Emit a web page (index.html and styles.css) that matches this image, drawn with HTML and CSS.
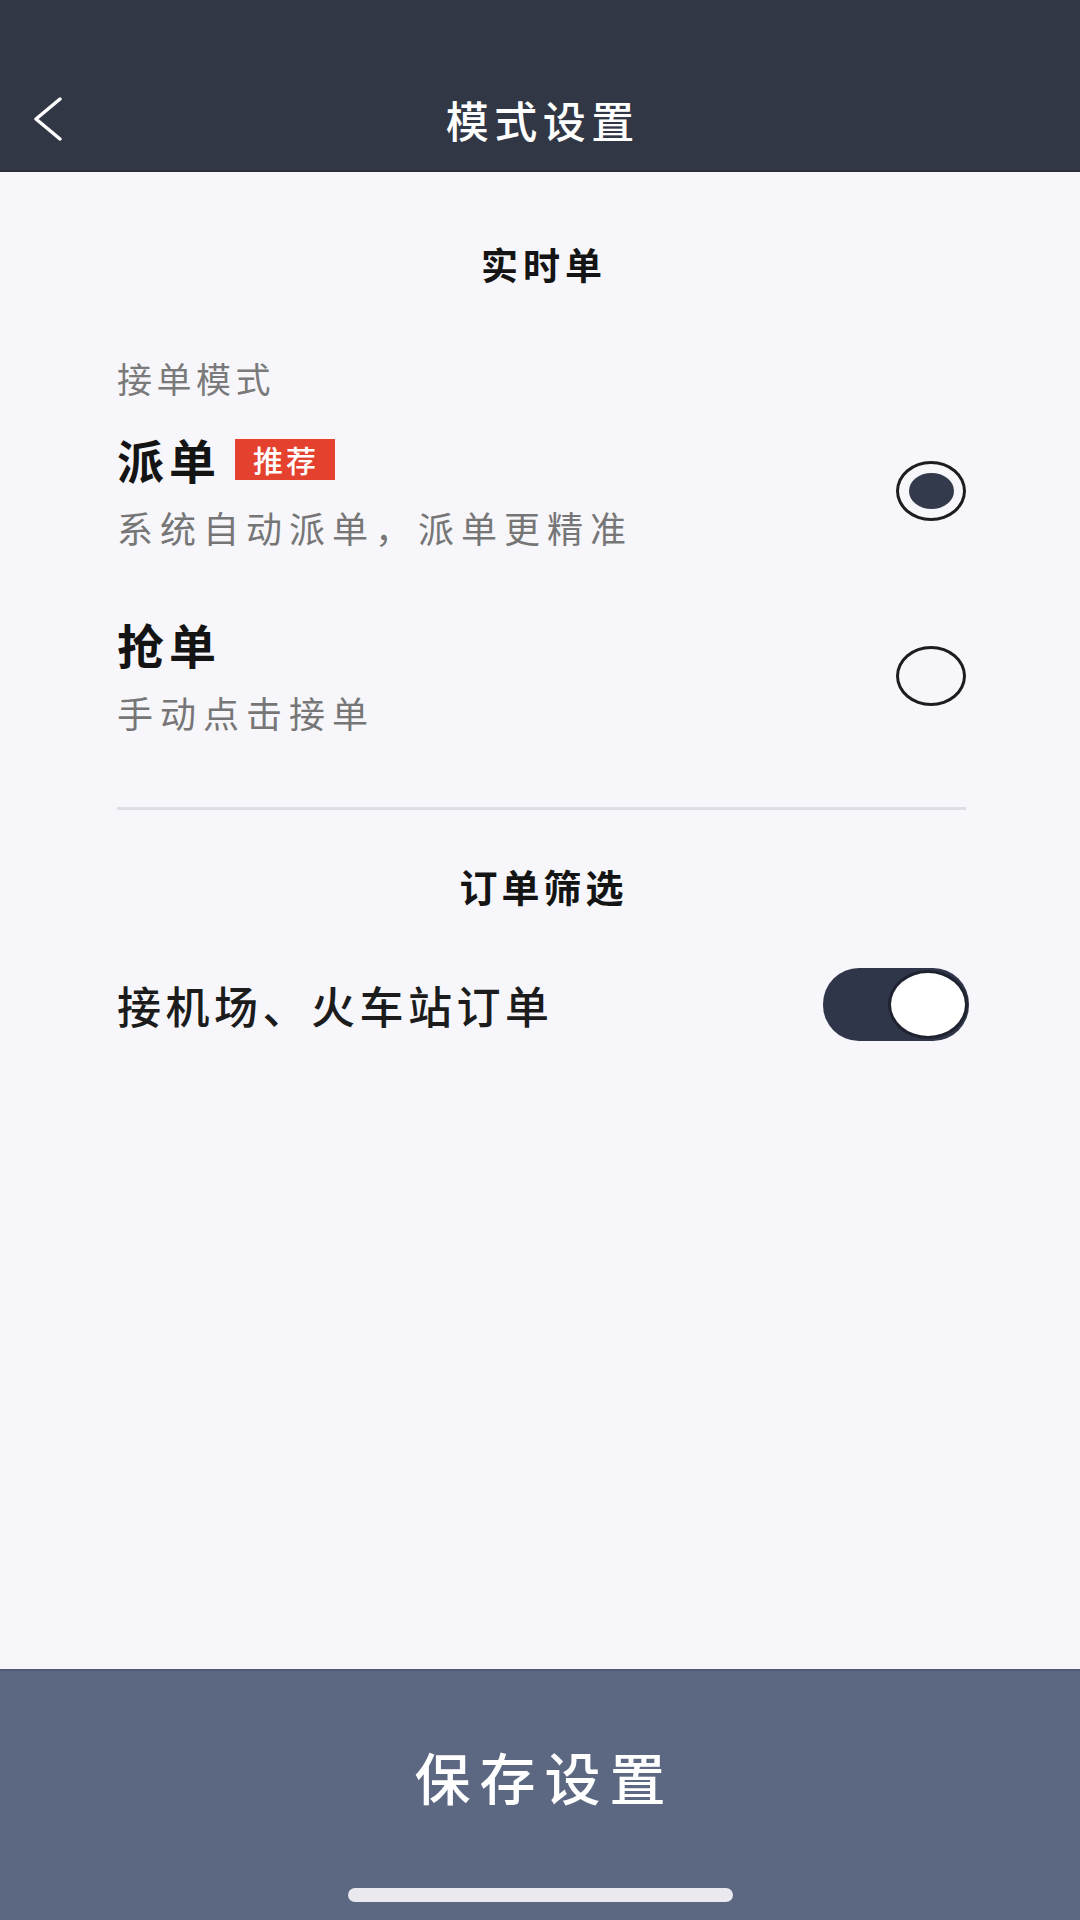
FILE: index.html
```html
<!DOCTYPE html>
<html lang="zh-CN">
<head>
    <meta charset="UTF-8">
    <title>模式设置</title>
    <meta name="viewport" content="width=device-width, initial-scale=1">
    <link rel="stylesheet" href="styles.css">
</head>
<body>
    <header class="topbar">
        <div class="nav">
            <a class="back" href="#" aria-label="返回">
                <svg width="30" height="44" viewBox="0 0 30 44"><path d="M27 2 L3 22 L27 42" fill="none" stroke="#fff" stroke-width="3.5" stroke-linecap="round" stroke-linejoin="round"/></svg>
            </a>
            <h1 class="title">模式设置</h1>
            <span></span>
        </div>
    </header>

    <main class="content">
        <h2 class="section-title first">实时单</h2>
        <div class="label">接单模式</div>

        <div class="option">
            <div class="option-text">
                <div class="option-name">派单<span class="badge">推荐</span></div>
                <div class="option-desc">系统自动派单，派单更精准</div>
            </div>
            <span class="radio checked"><span class="dot"></span></span>
        </div>

        <div class="option second">
            <div class="option-text">
                <div class="option-name">抢单</div>
                <div class="option-desc">手动点击接单</div>
            </div>
            <span class="radio"></span>
        </div>

        <hr class="divider">

        <h2 class="section-title">订单筛选</h2>
        <div class="switch-row">
            <span class="switch-label">接机场、火车站订单</span>
            <span class="switch on"><span class="knob"></span></span>
        </div>
    </main>

    <footer class="bottom">
        <button class="save" type="button">保存设置</button>
        <div class="home-bar"></div>
    </footer>
</body>
</html>
```

FILE: styles.css
```css
body { margin: 0; min-height: 1920px; display: flex; flex-direction: column; background: #f7f7fb; font-family: "Noto Sans CJK SC", "Noto Sans", sans-serif; color: #141414; }

/* top bar */
.topbar { background: #323746; padding-top: 68px; height: 102px; border-bottom: 2px solid #2a2f3c; }
.nav { height: 102px; display: grid; grid-template-columns: 1fr auto 1fr; align-items: center; padding: 0 33px; }
.back { display: flex; align-items: center; }
.title { margin: 0; color: #fff; font-size: 43px; font-weight: 500; line-height: 50px; letter-spacing: 5.5px; text-indent: 5.5px; }

/* content */
.content { flex: 1; padding: 0 114px 0 117px; }
.section-title { margin: 51px 0 0; text-align: center; font-size: 38px; font-weight: 700; line-height: 50px; letter-spacing: 4px; text-indent: 4px; }
.section-title.first { margin-top: 67px; font-size: 37px; letter-spacing: 5px; text-indent: 5px; }
.label { margin-top: 67px; font-size: 35px; line-height: 44px; color: #7a7a7a; letter-spacing: 4.5px; }

.option { display: flex; align-items: center; justify-content: space-between; margin-top: 31px; }
.option.second { margin-top: 65px; }
.option-name { display: flex; align-items: center; font-size: 47px; font-weight: 700; line-height: 56px; letter-spacing: 5px; }
.option-desc { margin-top: 16px; font-size: 36px; line-height: 48px; color: #767676; letter-spacing: 7px; }
.badge { margin-left: 14px; padding: 0 16px 0 18px; height: 41px; line-height: 41px; background: #e5412f; color: #fff; font-size: 30px; font-weight: 500; letter-spacing: 3px; }

.radio { width: 64px; height: 54px; border: 3px solid #1d1d1f; border-radius: 50%; display: flex; align-items: center; justify-content: center; }
.radio .dot { width: 45px; height: 36px; border-radius: 50%; background: #333a4b; }

.divider { margin: 71px 0 0; border: none; height: 3px; background: #dedee4; }

.switch-row { display: flex; align-items: center; justify-content: space-between; margin-top: 57px; margin-right: -3px; }
.switch-label { font-size: 44px; font-weight: 500; line-height: 60px; letter-spacing: 4.5px; color: #1c1c1c; }
.switch { width: 146px; height: 73px; box-sizing: border-box; border-radius: 36px; background: #30364a; display: flex; align-items: center; justify-content: flex-end; padding: 0 1px; }
.knob { width: 80px; height: 69px; box-sizing: border-box; border: 3px solid #1f2330; border-radius: 50%; background: #fff; }

/* bottom save button */
.bottom { background: #5c6782; padding: 70px 0 18px; display: flex; flex-direction: column; align-items: center; border-top: 2px solid #4f5a74; }
.save { background: none; border: none; padding: 0; color: #fff; font-family: inherit; font-size: 56px; font-weight: 500; line-height: 70px; letter-spacing: 9px; text-indent: 9px; }
.home-bar { margin-top: 77px; width: 385px; height: 14px; border-radius: 7px; background: #e9e9ef; }
```
